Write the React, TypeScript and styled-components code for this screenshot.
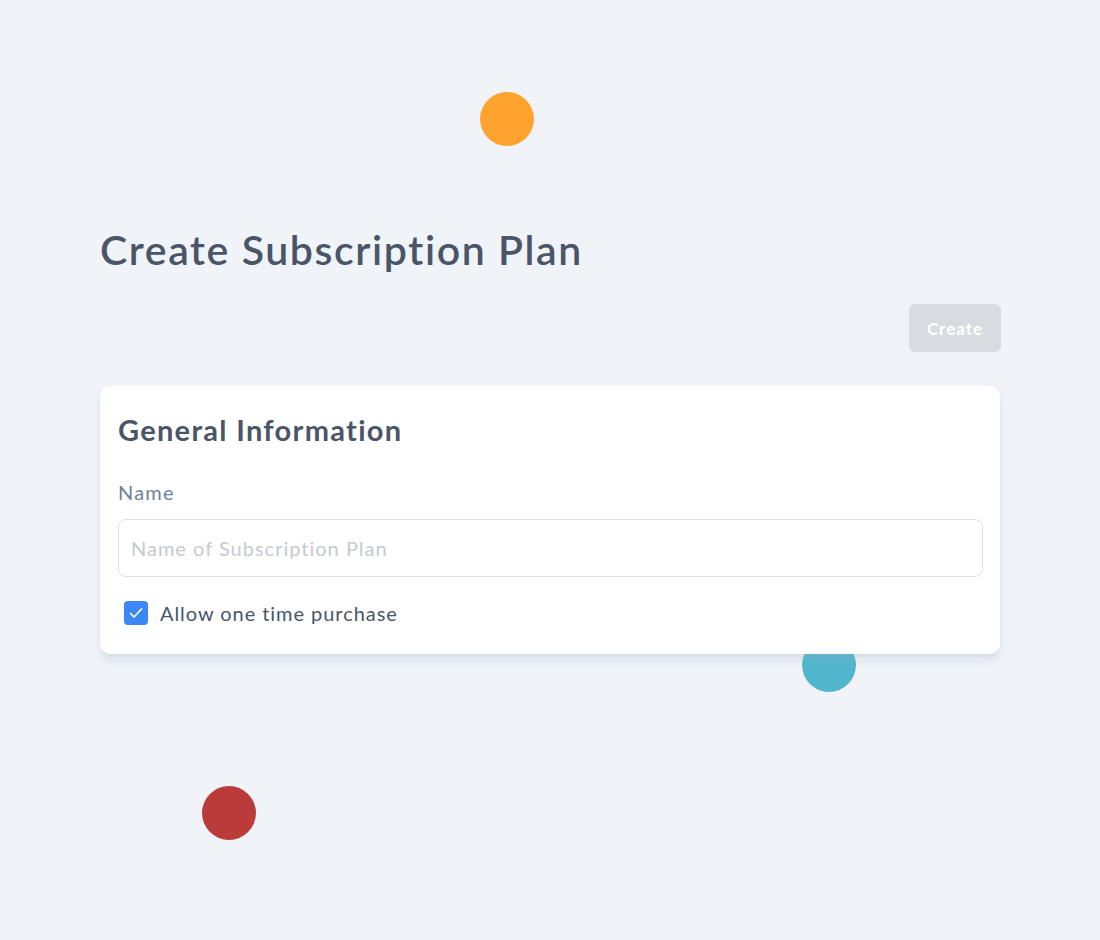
import React from "react";
import styled, { createGlobalStyle } from "styled-components";

const Global = createGlobalStyle`
  html, body { margin: 0; padding: 0; background: #f0f3f8; }
  body { font-family: "Lato", "Noto Sans", sans-serif; }
  * { box-sizing: border-box; }
`;

const Page = styled.div`
  position: relative;
  width: 1100px;
  height: 940px;
  overflow: hidden;
  background: #f0f3f8;
`;

const Dot = styled.div<{ $color: string }>`
  position: absolute;
  width: 54px;
  height: 54px;
  border-radius: 50%;
  background: ${(p) => p.$color};
`;

const Content = styled.main`
  position: relative;
  z-index: 1;
  width: 900px;
  margin-left: 100px;
  padding-top: 222px;
  display: flex;
  flex-direction: column;
`;

const Title = styled.h1`
  margin: 0;
  font-size: 41px;
  line-height: 56px;
  font-weight: 600;
  color: #4a5568;
  letter-spacing: 1.6px;
`;

const Actions = styled.div`
  display: flex;
  justify-content: flex-end;
  margin-top: 26px;
  margin-right: -1px;
`;

const Button = styled.button`
  width: 92px;
  height: 48px;
  border: none;
  border-radius: 6px;
  background: #d8dce1;
  color: #ffffff;
  font-family: inherit;
  font-weight: 700;
  font-size: 17px;
  letter-spacing: 1px;
  cursor: not-allowed;
`;

const Card = styled.section`
  margin-top: 34px;
  background: #ffffff;
  border-radius: 10px;
  padding: 22px 17px 28px 18px;
  box-shadow: 0 8px 10px -2px rgba(160, 174, 192, 0.25), 0 2px 4px rgba(160, 174, 192, 0.12);
  display: flex;
  flex-direction: column;
`;

const CardTitle = styled.h2`
  margin: 0;
  font-size: 29px;
  line-height: 44px;
  font-weight: 700;
  color: #4a5568;
  letter-spacing: 1.3px;
`;

const Label = styled.label`
  margin-top: 27px;
  font-size: 20px;
  line-height: 26px;
  color: #718096;
  letter-spacing: 1.2px;
`;

const Input = styled.input`
  margin-top: 14px;
  height: 58px;
  width: 100%;
  border: 1.5px solid #dde2e8;
  border-radius: 8px;
  padding: 0 12px;
  font-family: inherit;
  font-size: 20px;
  letter-spacing: 1px;
  color: #4a5568;
  outline: none;
  &::placeholder { color: #c3cad4; }
`;

const CheckRow = styled.label`
  margin-top: 23px;
  display: flex;
  align-items: center;
  gap: 12px;
  padding-left: 6px;
  font-size: 20px;
  line-height: 26px;
  color: #4a5568;
  letter-spacing: 0.95px;
`;

const Box = styled.span`
  width: 24px;
  height: 24px;
  border-radius: 4px;
  background: #3d86f5;
  display: flex;
  align-items: center;
  justify-content: center;
`;

export default function App() {
  return (
    <Page>
      <Global />
      <Dot $color="#ffa32f" style={{ left: 480, top: 92 }} />
      <Dot $color="#bb3b3b" style={{ left: 202, top: 786 }} />
      <Dot $color="#4fb6ce" style={{ left: 802, top: 638 }} />
      <Content>
        <Title>Create Subscription Plan</Title>
        <Actions>
          <Button disabled>Create</Button>
        </Actions>
        <Card>
          <CardTitle>General Information</CardTitle>
          <Label htmlFor="name">Name</Label>
          <Input id="name" placeholder="Name of Subscription Plan" />
          <CheckRow>
            <Box>
              <svg width="18" height="18" viewBox="0 0 18 18" fill="none">
                <path d="M3.5 9.5l3.5 3.5 7.5-8" stroke="#fff" strokeWidth="1.7" strokeLinecap="round" strokeLinejoin="round" />
              </svg>
            </Box>
            Allow one time purchase
          </CheckRow>
        </Card>
      </Content>
    </Page>
  );
}
